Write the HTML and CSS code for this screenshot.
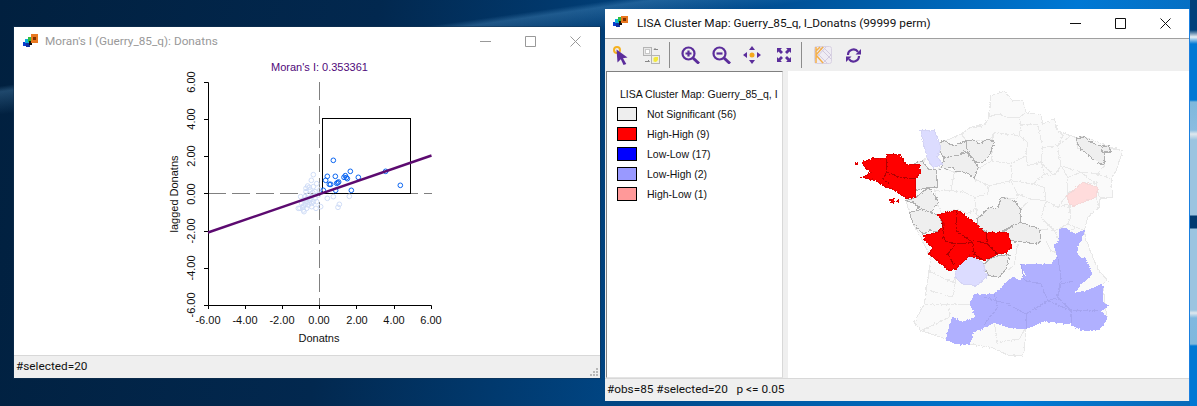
FILE: index.html
```html
<!DOCTYPE html>
<html lang="en">
<head>
    <meta charset="UTF-8">
    <title>GeoDa windows</title>
    <link rel="stylesheet" href="styles.css">
</head>
<body>
<div class="desktop">

    <!-- Moran scatter plot window -->
    <div class="window window-moran">
        <div class="titlebar inactive">
            <svg class="app-icon" viewBox="0 0 16 14">
                <rect x="0" y="8" width="4" height="4" fill="#0a3cd0"/>
                <rect x="2" y="5" width="4" height="4" fill="#10b0d8"/>
                <rect x="3" y="9" width="4" height="4" fill="#1030a0"/>
                <rect x="5" y="3" width="4" height="5" fill="#30c040"/>
                <rect x="6" y="7" width="3" height="4" fill="#101010"/>
                <rect x="8" y="0" width="7" height="9" fill="#e87820"/>
                <rect x="10" y="3" width="3" height="3" fill="#803000"/>
            </svg>
            <span class="title-text">Moran's I (Guerry_85_q): Donatns</span>
            <div class="win-buttons">
                <svg viewBox="0 0 11 11"><path d="M0 5.5H11" /></svg>
                <svg viewBox="0 0 11 11"><path d="M.5 .5H10.5V10.5H.5Z" /></svg>
                <svg viewBox="0 0 11 11"><path d="M.5 .5L10.5 10.5M10.5 .5L.5 10.5" /></svg>
            </div>
        </div>
        <div class="plot-area">
            <svg class="plot" viewBox="15 55 584 300">
                <text class="plot-title" x="319.5" y="71">Moran's I: 0.353361</text>

                <line class="dash" x1="319.5" y1="82" x2="319.5" y2="305"/>
                <line class="dash" x1="208" y1="193.5" x2="432" y2="193.5"/>

                <rect class="box" x="322.5" y="118.5" width="88" height="75"/>

                <path class="axis" d="M204 82.5H208.5V305.5H204M208.5 305.5H431.5M208.5 305.5V309M245.5 305.5V309M282.5 305.5V309M319.5 305.5V309M356.5 305.5V309M394.5 305.5V309M431.5 305.5V309M204 119.5H208.5M204 156.5H208.5M204 193.5H208.5M204 231.5H208.5M204 268.5H208.5"/>

                <g class="ticks">
                    <text x="208" y="324">-6.00</text>
                    <text x="245" y="324">-4.00</text>
                    <text x="282" y="324">-2.00</text>
                    <text x="319" y="324">0.00</text>
                    <text x="357" y="324">2.00</text>
                    <text x="394" y="324">4.00</text>
                    <text x="431" y="324">6.00</text>
                    <text transform="translate(195 82) rotate(-90)">6.00</text>
                    <text transform="translate(195 119) rotate(-90)">4.00</text>
                    <text transform="translate(195 156) rotate(-90)">2.00</text>
                    <text transform="translate(195 194) rotate(-90)">0.00</text>
                    <text transform="translate(195 231) rotate(-90)">-2.00</text>
                    <text transform="translate(195 268) rotate(-90)">-4.00</text>
                    <text transform="translate(195 305) rotate(-90)">-6.00</text>
                    <text x="319" y="342">Donatns</text>
                    <text transform="translate(178 194) rotate(-90)">lagged Donatns</text>
                </g>

                <g transform="translate(270 100) scale(.3333)">
                    <g class="pts-off">
                        <circle cx="130" cy="224" r="7"/><circle cx="124" cy="241" r="7"/><circle cx="140" cy="251" r="7"/>
                        <circle cx="118" cy="262" r="7"/><circle cx="130" cy="260" r="7"/><circle cx="108" cy="275" r="7"/>
                        <circle cx="120" cy="270" r="7"/><circle cx="135" cy="275" r="7"/><circle cx="150" cy="270" r="7"/>
                        <circle cx="172" cy="295" r="7"/><circle cx="190" cy="290" r="7"/><circle cx="238" cy="289" r="7"/>
                        <circle cx="208" cy="313" r="7"/><circle cx="204" cy="322" r="7"/><circle cx="152" cy="320" r="7"/>
                        <circle cx="92" cy="290" r="7"/><circle cx="105" cy="290" r="7"/><circle cx="115" cy="285" r="7"/>
                        <circle cx="125" cy="290" r="7"/><circle cx="135" cy="295" r="7"/><circle cx="145" cy="285" r="7"/>
                        <circle cx="100" cy="300" r="7"/><circle cx="110" cy="305" r="7"/><circle cx="120" cy="300" r="7"/>
                        <circle cx="130" cy="305" r="7"/><circle cx="95" cy="310" r="7"/><circle cx="105" cy="315" r="7"/>
                        <circle cx="115" cy="315" r="7"/><circle cx="90" cy="325" r="7"/><circle cx="100" cy="330" r="7"/>
                        <circle cx="110" cy="325" r="7"/><circle cx="125" cy="320" r="7"/><circle cx="138" cy="325" r="7"/>
                        <circle cx="102" cy="335" r="7"/><circle cx="108" cy="265" r="7"/><circle cx="113" cy="258" r="7"/>
                        <circle cx="100" cy="318" r="7"/><circle cx="112" cy="295" r="7"/><circle cx="125" cy="310" r="7"/>
                        <circle cx="140" cy="305" r="7"/><circle cx="98" cy="322" r="7"/><circle cx="118" cy="308" r="7"/>
                        <circle cx="85" cy="325" r="7"/><circle cx="105" cy="300" r="7"/><circle cx="128" cy="278" r="7"/>
                    </g>
                    <g class="pts-on">
                        <circle cx="190" cy="181" r="7"/><circle cx="241" cy="214" r="7"/><circle cx="172" cy="229" r="7"/>
                        <circle cx="196" cy="229" r="7"/><circle cx="226" cy="227" r="7"/><circle cx="222" cy="232" r="7"/>
                        <circle cx="232" cy="236" r="7"/><circle cx="229" cy="233" r="7"/><circle cx="265" cy="232" r="7"/>
                        <circle cx="167" cy="241" r="7"/><circle cx="178" cy="253" r="7"/><circle cx="182" cy="253" r="7"/>
                        <circle cx="200" cy="250" r="7"/><circle cx="206" cy="246" r="7"/><circle cx="203" cy="248" r="7"/>
                        <circle cx="160" cy="271" r="7"/><circle cx="197" cy="271" r="7"/><circle cx="244" cy="271" r="7"/>
                        <circle cx="347" cy="214" r="7"/><circle cx="391" cy="256" r="7"/>
                    </g>
                </g>

                <line class="fit" x1="208" y1="232.5" x2="431.5" y2="155.5"/>
            </svg>
        </div>
        <div class="statusbar">
            <span>#selected=20</span>
            <svg class="grip" viewBox="0 0 9 9"><path d="M6 0h2v2H6zM3 3h2v2H3zM6 3h2v2H6zM0 6h2v2H0zM3 6h2v2H3zM6 6h2v2H6z"/></svg>
        </div>
    </div>

    <!-- LISA cluster map window -->
    <div class="window window-lisa">
        <div class="titlebar active">
            <svg class="app-icon" viewBox="0 0 16 14">
                <rect x="0" y="6" width="4" height="4" fill="#0a3cd0"/>
                <rect x="2" y="3" width="4" height="4" fill="#10b0d8"/>
                <rect x="3" y="7" width="4" height="4" fill="#1030a0"/>
                <rect x="5" y="1" width="4" height="5" fill="#30c040"/>
                <rect x="6" y="5" width="3" height="4" fill="#101010"/>
                <rect x="8" y="0" width="7" height="7" fill="#e87820"/>
                <rect x="10" y="2" width="3" height="3" fill="#803000"/>
            </svg>
            <span class="title-text">LISA Cluster Map: Guerry_85_q, I_Donatns (99999 perm)</span>
            <div class="win-buttons">
                <svg viewBox="0 0 11 11"><path d="M0 5.5H11" /></svg>
                <svg viewBox="0 0 11 11"><path d="M.5 .5H10.5V10.5H.5Z" /></svg>
                <svg viewBox="0 0 11 11"><path d="M.5 .5L10.5 10.5M10.5 .5L.5 10.5" /></svg>
            </div>
        </div>

        <div class="toolbar">
            <svg class="tool tool-select" viewBox="0 0 15 19">
                <circle cx="4" cy="4" r="3" fill="none" stroke="#f5b120" stroke-width="2"/>
                <path d="M3.500 3.500L14.500 11.500L10 12.300L13.300 18L10.500 19L7.800 13.300L4.500 16.500Z" fill="#5b2d9b"/>
            </svg>
            <svg class="tool tool-copy" viewBox="0 0 17 17">
                <rect x=".5" y=".5" width="8" height="8" fill="#e8e8e8" stroke="#b4b4b4"/>
                <rect x="2.500" y="2.500" width="4" height="4" fill="#fff" stroke="#c8c8c8"/>
                <rect x="8.500" y="8.500" width="8" height="8" fill="#f0f0e0" stroke="#b4b4b4"/>
                <path d="M10.500 14.500V11L12 10H15V13L13 15Z" fill="#f2e83a"/>
                <path d="M11 2.500H15M11 2.500L12.500 1M2 14.500H6.500M6.500 14.500L5 13" stroke="#888" fill="none"/>
            </svg>
            <div class="tool-sep"></div>
            <svg class="tool tool-lens" viewBox="0 0 19 18">
                <circle cx="7.500" cy="7.500" r="6" class="ic-line"/>
                <path d="M12 12L18 17.500" class="ic-line thick"/>
                <path d="M4.500 7.500H10.500M7.500 4.500V10.500" class="ic-line"/>
            </svg>
            <svg class="tool tool-lens lens-two" viewBox="0 0 19 18">
                <circle cx="7.500" cy="7.500" r="6" class="ic-line"/>
                <path d="M12 12L18 17.500" class="ic-line thick"/>
                <path d="M4.500 7.500H10.500" class="ic-line"/>
            </svg>
            <svg class="tool tool-move" viewBox="0 0 18 18">
                <path d="M9 0L12 4H6ZM9 18L6 14H12ZM0 9L4 6V12ZM18 9L14 12V6Z" fill="#5b2d9b"/>
                <circle cx="9" cy="9" r="2.500" fill="#f5a81c"/>
            </svg>
            <svg class="tool tool-fit" viewBox="0 0 16 16">
                <path d="M1 1H6L4.500 2.500L7 5L5 7L2.500 4.500L1 6ZM15 1V6L13.500 4.500L11 7L9 5L11.500 2.500L10 1ZM1 15V10L2.500 11.500L5 9L7 11L4.500 13.500L6 15ZM15 15H10L11.500 13.500L9 11L11 9L13.500 11.500L15 10Z" fill="#5b2d9b"/>
            </svg>
            <div class="tool-sep"></div>
            <svg class="tool tool-map" viewBox="0 0 18 18">
                <rect x=".5" y=".5" width="17" height="17" rx="2" fill="#efecf3" stroke="#d8d2e2"/>
                <path d="M9 1L17 9L9 17M5 1L17 13M12 1L1 13M1 5L13 17" stroke="#d2cade" fill="none"/>
                <path d="M9 1L2 9L9 17M2 1V17M2 5L6 1" stroke="#f4b04a" stroke-width="1.500" fill="none"/>
            </svg>
            <svg class="tool tool-refresh" viewBox="0 0 15 15">
                <path d="M2 7A5.500 5.500 0 0 1 12 3.800" class="ic-line"/>
                <path d="M13 8A5.500 5.500 0 0 1 3 11.200" class="ic-line"/>
                <path d="M15 1V6.500H9.500ZM0 14V8.500H5.500Z" fill="#5b2d9b"/>
            </svg>
        </div>

        <div class="lisa-body">
            <div class="legend">
                <div class="legend-title">LISA Cluster Map: Guerry_85_q, I</div>
                <div class="legend-row"><span class="swatch sw-none"></span>Not Significant (56)</div>
                <div class="legend-row"><span class="swatch sw-hh"></span>High-High (9)</div>
                <div class="legend-row"><span class="swatch sw-ll"></span>Low-Low (17)</div>
                <div class="legend-row"><span class="swatch sw-lh"></span>Low-High (2)</div>
                <div class="legend-row"><span class="swatch sw-hl"></span>High-Low (1)</div>
            </div>
            <div class="sash"></div>
            <div class="map-pane">
                <svg class="map" viewBox="-159 -39 1203 915" shape-rendering="crispEdges">
                    <filter id="rough" x="-5%" y="-5%" width="110%" height="110%" color-interpolation-filters="sRGB">
                        <feTurbulence type="fractalNoise" baseFrequency=".14" numOctaves="2" seed="4"/>
                        <feDisplacementMap in="SourceGraphic" scale="9" xChannelSelector="R" yChannelSelector="G"/>
                    </filter>
                    <g filter="url(#rough)">
                    <!-- whole country first, departments on top -->
                    <polygon class="dep" points="450,38 490,22 515,50 545,50 555,85 600,92 605,120 640,105 650,140 700,160 730,158 810,190 845,200 825,260 810,285 815,340 775,345 775,370 740,400 730,440 735,470 770,555 800,590 785,600 798,705 770,740 725,740 690,720 650,715 610,710 555,735 550,800 545,815 505,815 450,790 385,780 315,765 240,740 220,715 250,660 270,520 265,510 215,415 205,385 195,350 218,295 225,235 245,232 290,180 360,150 385,133 440,115"/>
                    <polygon class="dep" points="450,35 490,22 515,50 545,50 555,85 535,100 500,100 470,90 445,98"/>
                    <polygon class="dep" points="555,85 600,92 605,120 640,105 645,130 665,155 650,185 605,190 590,120 540,120 535,100"/>
                    <polygon class="dep" points="360,150 385,133 430,125 445,98 470,90 500,100 535,100 540,120 535,155 460,145 445,170 375,168"/>
                    <polygon class="dep" points="460,145 535,155 560,175 555,215 510,240 450,230 450,180"/>
                    <polygon class="dep" points="540,120 590,120 605,190 600,235 560,245 555,215 560,175 535,155"/>
                    <polygon class="dep" points="605,190 650,185 660,245 640,275 600,235"/>
                    <polygon class="dep" points="650,185 690,155 705,160 710,190 760,225 790,245 770,270 720,265 660,245"/>
                    <polygon class="dep" points="790,190 845,200 825,260 810,285 770,270 790,245"/>
                    <polygon class="dep" points="770,270 810,285 815,340 775,340 765,300"/>
                    <polygon class="dep" points="410,255 450,230 510,240 510,290 445,305 400,285"/>
                    <polygon class="dep" points="510,240 555,215 560,245 600,235 610,270 575,300 510,290"/>
                    <polygon class="dep" points="340,265 410,255 400,285 445,305 440,330 400,340 370,325 330,320"/>
                    <polygon class="dep" points="285,260 300,250 340,265 330,320 285,320"/>
                    <polygon class="dep" points="280,320 330,320 370,325 400,340 410,370 380,390 350,375 300,385 290,360"/>
                    <polygon class="dep" points="400,340 440,330 445,305 510,290 530,330 530,345 480,340 470,375 445,370 410,405"/>
                    <polygon class="dep" points="510,290 575,300 610,310 615,350 570,345 530,330"/>
                    <polygon class="dep" points="575,300 610,270 640,275 660,245 680,280 680,330 650,370 615,350 610,310"/>
                    <polygon class="dep" points="680,280 720,265 765,300 730,295 680,330"/>
                    <polygon class="dep" points="615,350 650,370 680,360 690,400 680,420 640,440 600,400"/>
                    <polygon class="dep" points="685,362 765,340 775,370 740,400 730,440 680,420 690,400"/>
                    <polygon class="dep" points="538,375 570,345 615,350 600,400 640,440 595,435 538,415"/>

                    <!-- south, unselected lines -->
                    <polyline class="dep-line" points="270,620 335,640 345,580 330,600"/>
                    <polyline class="dep-line" points="250,660 330,660 395,660 400,630"/>
                    <polyline class="dep-line" points="325,670 325,700 240,740"/>
                    <polyline class="dep-line" points="260,560 345,600"/>
                    <polyline class="dep-line" points="460,720 470,780"/>
                    <polyline class="dep-line" points="550,735 535,765 465,775"/>
                    <polyline class="dep-line" points="640,440 660,480 700,430"/>
                    <polyline class="dep-line" points="615,470 630,500 660,510"/>
                    <polyline class="dep-line" points="530,480 520,540 500,560"/>

                    <!-- Low-Low, big southern region -->
                    <polygon class="ll" points="655,435 675,432 695,450 730,440 720,470 705,490 710,520 735,525 752,570 720,600 695,630 740,620 785,600 785,655 798,665 780,680 798,705 770,740 725,740 690,720 650,715 610,710 555,735 505,730 460,715 420,735 400,740 385,780 345,780 315,765 335,700 365,715 405,700 388,660 400,630 460,630 515,580 535,590 555,575 540,540 630,540 650,520 640,485 655,470"/>
                    <polyline class="ll-line" points="540,540 550,590 600,600 620,650 650,640 660,600 700,590"/>
                    <polyline class="ll-line" points="650,520 660,580 650,640 690,680 690,720"/>
                    <polyline class="ll-line" points="430,640 500,660 555,690 555,735"/>
                    <polyline class="ll-line" points="555,690 620,650 690,680 770,680"/>
                    <polyline class="ll-line" points="460,630 470,670 430,720"/>

                    <!-- selected, not significant -->
                    <polygon class="sel" points="288,180 310,170 335,185 375,170 378,200 345,215 310,222 300,210"/>
                    <polygon class="sel" points="375,170 400,170 415,180 440,165 460,175 445,215 425,235 405,235 378,200"/>
                    <polygon class="sel" points="310,222 345,215 378,205 395,225 412,250 400,282 375,265 345,262 335,250 300,255"/>
                    <polygon class="sel" points="705,165 730,158 750,175 775,185 790,185 790,240 780,243 745,215 718,195"/>
                    <polygon class="sel" points="780,190 805,185 808,205 785,205"/>
                    <polygon class="sel" points="225,235 245,232 262,255 285,258 290,310 262,310 225,320 218,295"/>
                    <polygon class="sel" points="195,350 225,340 262,310 285,340 292,355 270,385 240,375 215,355"/>
                    <polygon class="sel" points="205,385 245,375 270,385 295,395 305,420 300,445 265,440 245,450 215,415"/>
                    <polygon class="sel" points="410,405 445,370 470,375 480,340 520,350 538,375 538,415 485,440 480,460 440,445 410,430"/>
                    <polygon class="sel" points="490,440 538,415 595,435 600,470 590,480 510,470"/>
                    <polygon class="sel" points="425,545 445,525 470,515 505,512 495,555 475,580 445,575"/>

                    <!-- Low-High pale, High-Low pale -->
                    <polygon class="lh" points="240,140 280,140 300,190 290,220 305,240 275,250 260,225 245,170"/>
                    <polygon class="lh" points="385,515 425,535 438,575 410,605 365,600 342,580 345,555"/>
                    <polygon class="hl" points="678,335 725,295 770,310 765,340 700,365 685,360"/>

                    <!-- High-High -->
                    <polygon class="hh" points="63,235 90,225 135,223 140,210 175,210 195,240 235,240 238,265 222,285 222,340 195,343 155,315 135,310 105,290 65,280 90,265 75,255"/>
                    <polyline class="hh-line" points="135,223 138,265 125,285 145,300"/>
                    <polyline class="hh-line" points="138,265 180,280 222,285"/>
                    <polygon class="hh" points="42,235 50,235 50,242 42,242"/>
                    <polygon class="hh" points="148,345 160,345 160,354 148,354"/>
                    <polygon class="hh" points="165,349 172,349 172,353 165,353"/>
                    <polygon class="hh" points="248,455 290,445 310,420 292,392 350,378 408,420 430,445 500,445 512,485 500,505 470,510 430,530 385,515 345,555 325,560 300,540 265,510 275,490 255,475"/>
                    <polyline class="hh-line" points="345,378 345,440 395,475 345,480 320,510 340,545"/>
                    <polyline class="hh-line" points="305,420 310,470 345,480"/>
                    <polyline class="hh-line" points="395,475 400,510 430,530"/>
                    <polyline class="hh-line" points="435,445 440,480 470,510"/>
                    <polyline class="hh-line" points="400,470 440,480"/>
                    </g>
                </svg>
            </div>
        </div>

        <div class="statusbar">
            <span>#obs=85 #selected=20&nbsp;&nbsp; p &lt;= 0.05</span>
        </div>
    </div>
</div>
</body>
</html>
```

FILE: styles.css
```css
* {
    margin: 0;
    padding: 0;
    box-sizing: border-box;
}

body {
    background-color: #02284f;
}

.desktop {
    width: 1197px;
    height: 406px;
    overflow: hidden;
    position: relative;
    font-family: Roboto, "Liberation Sans", sans-serif;
    background-color: #02284f;
    background-image:
        linear-gradient(#00407a 0, #00407a 30px, #e8f0f4 37px, #0078d4 44px, #0078d4 100px, #7fb8dc 102px, #8abce0 130px, #dfe8ee 134px, #9cc4e0 140px, #9cc4e0 215px, #023a70 216px, #023a70 228px, #9cc4e0 229px, #9cc4e0 310px, #e0e8ee 313px, #80b8e0 318px, #7fb8dc 344px, #0078d4 346px, #0078d4 406px),
        linear-gradient(172deg, rgba(120, 190, 240, 0) 15%, rgba(120, 190, 240, .25) 16%, rgba(120, 190, 240, 0) 20%),
        linear-gradient(100deg, #01203f 0%, #02284f 30%, #004a8c 58%, #0078d4 85%, #0a6ab8 100%);
    background-size: 7px 100%, 100% 100%, 100% 100%;
    background-position: right top, 0 0, 0 0;
    background-repeat: no-repeat;
}

/* windows sit on the desktop at free positions */
.window {
    position: absolute;
    display: flex;
    flex-direction: column;
    background-color: #fff;
}

.window-moran {
    left: 14px;
    top: 27px;
    width: 586px;
    height: 351px;
    box-shadow: 0 0 0 1px rgba(20, 50, 80, .5);
}

.window-lisa {
    left: 605px;
    top: 9px;
    width: 585px;
    height: 392px;
    border-right: 1px solid #1a80e0;
}

.titlebar {
    display: flex;
    align-items: center;
    flex-shrink: 0;
    font-size: 11.8px;
    white-space: nowrap;
}

.window-moran .titlebar {
    height: 28px;
    padding-left: 9px;
}

.window-lisa .titlebar {
    height: 30px;
    padding-left: 8px;
    padding-bottom: 1px;
    border-bottom: 1px solid #a0a0a0;
}

.titlebar.inactive {
    color: #999;
}

.titlebar.active {
    color: #111;
}

.app-icon {
    width: 16px;
    height: 14px;
    flex-shrink: 0;
}

.title-text {
    margin-left: 6px;
}

.window-lisa .title-text {
    margin-left: 8px;
}

.win-buttons {
    margin-left: auto;
    display: flex;
    gap: 34px;
    padding-right: 18px;
}

.window-moran .win-buttons {
    padding-right: 19px;
}

.win-buttons svg {
    width: 11px;
    height: 11px;
    fill: none;
    stroke: #111;
}

.inactive .win-buttons svg {
    stroke: #999;
}

.plot-area {
    flex: 1;
    min-height: 0;
    margin-left: 1px;
}

.plot {
    display: block;
    width: 584px;
    height: 300px;
    font-family: "Liberation Sans", sans-serif;
    font-size: 11px;
}

.plot-title {
    fill: #50087a;
    text-anchor: middle;
    font-size: 11px;
}

.ticks text {
    fill: #111;
    text-anchor: middle;
    font-size: 11px;
}

.dash {
    stroke: #808080;
    stroke-dasharray: 18 6;
}

.box {
    fill: none;
    stroke: #000;
}

.axis {
    fill: none;
    stroke: #000;
}

.pts-off circle {
    fill: none;
    stroke: #cfdcf6;
    stroke-width: 3;
}

.pts-on circle {
    fill: none;
    stroke: #0a64f0;
    stroke-width: 3;
}

.fit {
    stroke: #5c0a70;
    stroke-width: 2.4;
}

.statusbar {
    display: flex;
    align-items: center;
    justify-content: space-between;
    flex-shrink: 0;
    height: 23px;
    padding: 0 0 2px 2px;
    background-color: #efefef;
    border-top: 1px solid #d8d8d8;
    font-size: 11.8px;
    color: #111;
}

.grip {
    width: 9px;
    height: 9px;
    align-self: flex-end;
    margin-right: 1px;
    margin-bottom: -1px;
    fill: #b8b8b8;
}

.toolbar {
    display: flex;
    align-items: center;
    flex-shrink: 0;
    height: 32px;
    background-color: #efefef;
}

.tool {
    flex-shrink: 0;
}

.tool-select {
    width: 15px;
    height: 19px;
    margin-left: 8px;
}

.tool-copy {
    width: 17px;
    height: 17px;
    margin-left: 15px;
}

.tool-sep {
    width: 1px;
    height: 26px;
    background-color: #8c8c8c;
    margin-left: 9px;
}

.tool-lens {
    width: 19px;
    height: 18px;
    margin-left: 11px;
}

.lens-two {
    margin-left: 12px;
}

.tool-move {
    width: 18px;
    height: 18px;
    margin-left: 12px;
}

.tool-fit {
    width: 16px;
    height: 16px;
    margin-left: 15px;
}

.tool-map {
    width: 18px;
    height: 18px;
    margin-left: 12px;
}

.tool-refresh {
    width: 15px;
    height: 15px;
    margin-left: 14px;
}

.ic-line {
    fill: none;
    stroke: #5b2d9b;
    stroke-width: 2.2;
}

.ic-line.thick {
    stroke-width: 3;
}

.lisa-body {
    flex: 1;
    min-height: 0;
    display: flex;
    background-color: #efefef;
}

.legend {
    width: 177px;
    margin-left: 1px;
    padding: 15px 0 0 10px;
    background-color: #fff;
    border-top: 1px solid #808080;
    border-left: 1px solid #808080;
    border-right: 1px solid #d8d8d8;
    border-bottom: 1px solid #e4e4e4;
    overflow: hidden;
    font-family: "Liberation Sans", sans-serif;
    font-size: 10.5px;
    color: #111;
    white-space: nowrap;
}

.legend-title {
    height: 15px;
    line-height: 15px;
    margin-left: 3px;
    margin-bottom: 2px;
}

.legend-row {
    display: flex;
    align-items: center;
    height: 20px;
}

.swatch {
    width: 20px;
    height: 14px;
    margin-right: 10px;
    border: 1px solid #000;
}

.sw-none { background-color: #eee; }
.sw-hh { background-color: #f00; }
.sw-ll { background-color: #00f; }
.sw-lh { background-color: #99f; }
.sw-hl { background-color: #f99; }

.sash {
    width: 5px;
}

.map-pane {
    flex: 1;
    min-width: 0;
    background-color: #fff;
}

.map {
    display: block;
    width: 401px;
    height: 305px;
}

.dep {
    fill: #fafafa;
    stroke: #e8e8e8;
    stroke-width: 3;
}

.dep-line {
    fill: none;
    stroke: #e8e8e8;
    stroke-width: 3;
}

.sel {
    fill: #efefef;
    stroke: #b0b0b0;
    stroke-width: 3;
}

.hh {
    fill: #f00;
    stroke: #e00000;
    stroke-width: 3;
}

.hh-line {
    fill: none;
    stroke: #b00000;
    stroke-width: 3;
}

.ll {
    fill: #b0b0ff;
    stroke: #b0b0ff;
    stroke-width: 3;
}

.ll-line {
    fill: none;
    stroke: #a4a4f0;
    stroke-width: 3;
}

.lh {
    fill: #dcdcff;
    stroke: #d4d4f4;
    stroke-width: 3;
}

.hl {
    fill: #ffdcdc;
    stroke: #f4d8d8;
    stroke-width: 3;
}
```
